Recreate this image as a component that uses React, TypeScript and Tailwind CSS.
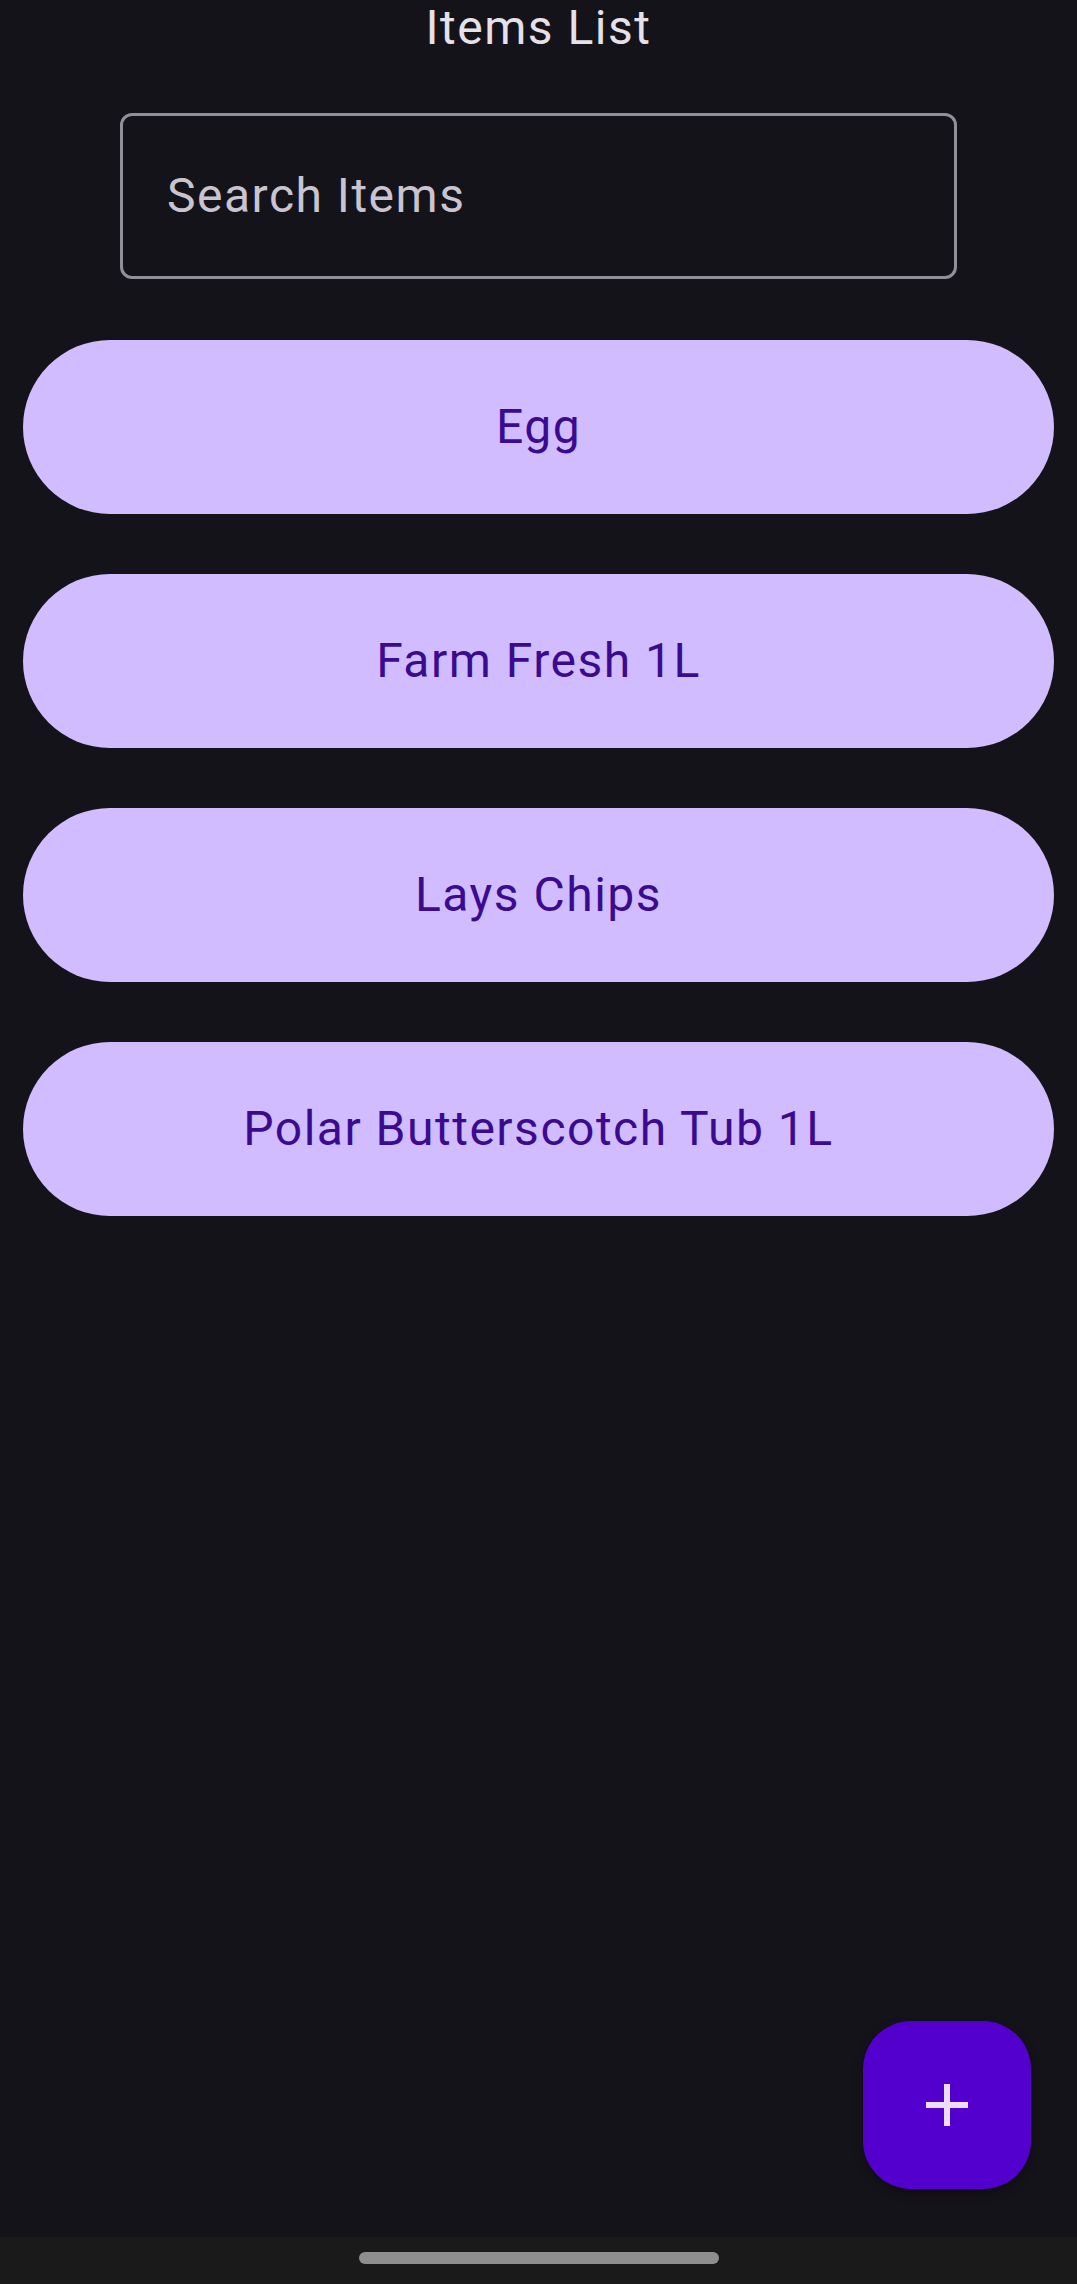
const ITEMS = ["Egg", "Farm Fresh 1L", "Lays Chips", "Polar Butterscotch Tub 1L"];

export default function App() {
  return (
    <div
      className="relative flex h-[2284px] w-[1077px] flex-col bg-[#15131a] tracking-[1.5px]"
      style={{ fontFamily: "Roboto, 'Noto Sans', sans-serif" }}
    >
      <div className="flex flex-1 flex-col">
        <h1 className="text-center text-[48px] font-normal leading-[56px] text-[#e6e0e9]">Items List</h1>

        <div className="mx-auto mt-[57px] flex h-[166px] w-[837px] items-center rounded-[12px] border-[3px] border-[#938f99] pl-[44px]">
          <span className="text-[48px] leading-[56px] text-[#cac4d0]">Search Items</span>
        </div>

        <div className="mt-[61px] flex flex-col gap-[60px] px-[23px]">
          {ITEMS.map((item) => (
            <button
              key={item}
              className="flex h-[174px] w-full items-center justify-center rounded-full bg-[#d0bcff] text-[48px] leading-[56px] text-[#3b0b8f]"
            >
              {item}
            </button>
          ))}
        </div>
      </div>

      {/* floating add button */}
      <button className="absolute bottom-[95px] right-[46px] flex h-[168px] w-[168px] items-center justify-center rounded-[48px] bg-[#5300cf] shadow-[0_4px_10px_rgba(0,0,0,0.35)]">
        <svg width="42" height="42" viewBox="0 0 42 42">
          <path d="M21 0V42M0 21H42" stroke="#eaddff" strokeWidth="6" />
        </svg>
      </button>

      <div className="flex h-[47px] items-start justify-center bg-[#1a1a1a] pt-[15px]">
        <div className="h-[12px] w-[360px] rounded-full bg-[#8e8e8e]" />
      </div>
    </div>
  );
}
